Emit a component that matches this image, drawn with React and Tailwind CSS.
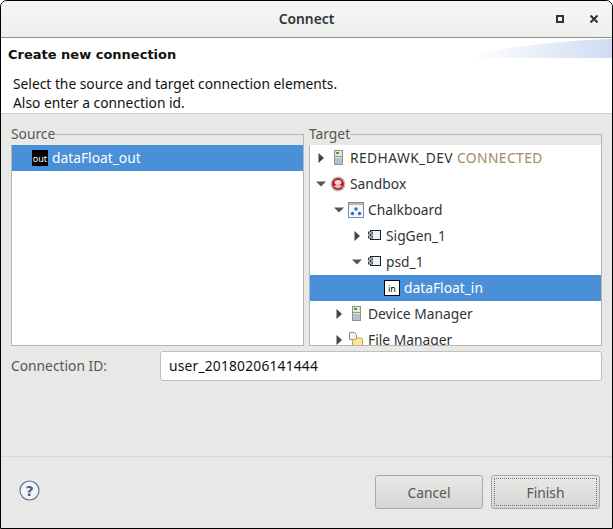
const Tri = ({ open }) => (
  <svg width="10" height="12" viewBox="0 0 10 12" className="shrink-0">
    {open ? <path d="M0 3.5h10L5 8.5z" fill="#555" /> : <path d="M2.5 1l5.5 5-5.5 5z" fill="#444" />}
  </svg>
);

const ServerIcon = () => (
  <svg width="9" height="15" viewBox="0 0 9 15" className="mb-px shrink-0">
    <rect x="0.5" y="0.5" width="8" height="14" fill="#e4e9de" stroke="#8b9680" />
    <rect x="2" y="2" width="3" height="2" fill="#2ea84a" />
    <rect x="1" y="6" width="7" height="1" fill="#8b9680" />
    <rect x="1" y="8" width="7" height="6" fill="#b4c2d0" />
  </svg>
);

const SandboxIcon = () => (
  <svg width="16" height="16" viewBox="0 0 16 16" className="shrink-0">
    <circle cx="8" cy="8" r="7.5" fill="#bdbdbd" />
    <circle cx="8" cy="8" r="6" fill="#b81f2a" />
    <ellipse cx="8" cy="6.5" rx="3.4" ry="2.4" fill="#f3d5d5" />
    <path d="M3.5 10.5l4.5-2.5 4.5 2.5-4.5 2z" fill="#e9b5b5" />
  </svg>
);

const BoardIcon = () => (
  <svg width="16" height="16" viewBox="0 0 16 16" className="shrink-0">
    <rect x="0.5" y="0.5" width="15" height="15" fill="#f4f8fc" stroke="#6e8fb5" />
    <rect x="1" y="1" width="14" height="2" fill="#e0b070" />
    <circle cx="8" cy="7" r="1.7" fill="#2f6db0" />
    <circle cx="4.5" cy="11.5" r="1.7" fill="#2f6db0" />
    <circle cx="11.5" cy="11.5" r="1.7" fill="#2f6db0" />
  </svg>
);

const CompIcon = () => (
  <svg width="13" height="10" viewBox="0 0 13 10" className="mb-[2px] shrink-0">
    <rect x="2.5" y="0.5" width="10" height="9" fill="#e3f1f8" stroke="#222" />
    <rect x="0.5" y="2" width="4" height="2" fill="#fff" stroke="#222" strokeWidth="0.8" />
    <rect x="0.5" y="6" width="4" height="2" fill="#fff" stroke="#222" strokeWidth="0.8" />
  </svg>
);

const FolderIcon = () => (
  <svg width="16" height="16" viewBox="0 0 16 16" className="shrink-0">
    <path d="M1.5.5h5l2 2v5h-7z" fill="#f4f4f4" stroke="#a08a60" />
    <path d="M4.5 7.5h3l1-1.5h5l1 1.5v7h-10z" fill="#fbe3a0" stroke="#c9a24e" />
  </svg>
);

const Port = ({ label, dark }) => (
  <span
    className={`flex h-4 w-4 shrink-0 items-center justify-center text-[9px] leading-none ${
      dark ? "bg-black text-white" : "border border-black bg-white text-black"
    }`}
  >
    {label}
  </span>
);

const Row = ({ indent, open, leaf, icon, selected, children }) => (
  <div
    className={`flex h-[26px] items-center gap-[4px] whitespace-nowrap ${
      selected ? "bg-[#4a90d9] text-white" : "text-[#2e3436]"
    }`}
    style={{ paddingLeft: indent }}
  >
    {leaf ? <span className="w-[10px] shrink-0" /> : <Tri open={open} />}
    <span className="flex w-4 shrink-0 justify-center">{icon}</span>
    <span>{children}</span>
  </div>
);

const Group = ({ title, children }) => (
  <fieldset className="min-w-0 flex-1 border border-[#b6b6b3]">
    <legend className="-ml-px h-[21px] leading-[20px] text-[#555753]">{title}</legend>
    <div className="h-[200px] overflow-hidden bg-white">{children}</div>
  </fieldset>
);

export default function App() {
  return (
    <div className="h-[529px] w-[613px] bg-white font-['Noto_Sans','Open_Sans',sans-serif] text-[13.8px]">
      <div className="flex h-full flex-col overflow-hidden rounded-t-[7px] border border-black bg-[#e8e8e7]">
        <div className="relative flex h-[37px] shrink-0 items-center justify-center border-b border-[#8f8f8c] bg-gradient-to-b from-[#f6f6f6] to-[#eeeeed] font-semibold text-[#2e3436]">
          Connect
          <div className="absolute right-[14px] top-[14px] flex items-center gap-[26px]">
            <span className="h-[8px] w-[8px] border-2 border-[#2e3436]" />
            <svg width="8" height="8" viewBox="0 0 8 8">
              <path d="M.5.5l7 7M7.5.5l-7 7" stroke="#2e3436" strokeWidth="2" />
            </svg>
          </div>
        </div>

        <div className="relative h-[76px] shrink-0 border-b border-[#d0d0ce] bg-white text-[#111]">
          <svg width="141" height="20" viewBox="0 0 141 20" className="absolute right-0 top-0">
            <defs>
              <linearGradient id="swoosh" x1="0" x2="1" y1="0" y2="0">
                <stop offset="0" stopColor="#ffffff" />
                <stop offset="1" stopColor="#cfdcf2" />
              </linearGradient>
            </defs>
            <path d="M0 20C25 10 80 3 141 1V20z" fill="url(#swoosh)" />
          </svg>
          <div className="relative pl-[7px] pt-[7px] font-['DejaVu_Sans',sans-serif] text-[13px] font-bold leading-[20px]">
            Create new connection
          </div>
          <div className="relative pl-[12px] pt-[9px] leading-[19px]">
            <div>Select the source and target connection elements.</div>
            <div>Also enter a connection id.</div>
          </div>
        </div>

        <div className="flex gap-[5px] px-[10px] pt-[10px]">
          <Group title="Source">
            <Row indent={6} leaf icon={<Port label="out" dark />} selected>
              dataFloat_out
            </Row>
          </Group>
          <Group title="Target">
            <Row indent={6} icon={<ServerIcon />}>
              <span className="tracking-[0.42px]">
                REDHAWK_DEV <span className="text-[#a08c5a]">CONNECTED</span>
              </span>
            </Row>
            <Row indent={6} open icon={<SandboxIcon />}>Sandbox</Row>
            <Row indent={24} open icon={<BoardIcon />}>Chalkboard</Row>
            <Row indent={42} icon={<CompIcon />}>SigGen_1</Row>
            <Row indent={42} open icon={<CompIcon />}>psd_1</Row>
            <Row indent={60} leaf icon={<Port label="in" />} selected>dataFloat_in</Row>
            <Row indent={24} icon={<ServerIcon />}>Device Manager</Row>
            <Row indent={24} icon={<FolderIcon />}>File Manager</Row>
          </Group>
        </div>

        <div className="mt-[5px] flex items-center px-[10px]">
          <label className="w-[149px] text-[#555753]">Connection ID:</label>
          <input
            readOnly
            value="user_20180206141444"
            className="h-[30px] flex-1 rounded-[3px] border border-[#c0c0bd] bg-white px-[8px] pb-[2px] tracking-[0.2px] text-[#111] outline-none"
          />
        </div>

        <div className="mt-auto flex h-[72px] shrink-0 items-start justify-between border-t border-[#d6d6d3] pl-[18px] pr-[12px] pt-[18px]">
          <svg width="21" height="21" viewBox="0 0 21 21" className="mt-[5px]">
            <circle cx="10.5" cy="10.5" r="9.5" fill="#f2f4f7" stroke="#5f7396" strokeWidth="1.2" />
            <text x="10.5" y="15.5" textAnchor="middle" fontSize="14" fontWeight="700" fill="#4f5f7d" fontFamily="DejaVu Sans">?</text>
          </svg>
          <div className="flex gap-[8px]">
            <button className="h-[34px] w-[108px] rounded-[3px] border border-[#a8a8a5] bg-gradient-to-b from-[#e9e9e8] to-[#d5d5d3] pt-[2px] text-[#555753]">
              Cancel
            </button>
            <button className="h-[34px] w-[109px] rounded-[3px] border border-[#a8a8a5] bg-gradient-to-b from-[#e9e9e8] to-[#d5d5d3] p-[2px] text-[#555753]">
              <span className="flex h-full w-full items-center justify-center border border-dotted border-[#777] pt-[2px]">
                Finish
              </span>
            </button>
          </div>
        </div>
      </div>
    </div>
  );
}
